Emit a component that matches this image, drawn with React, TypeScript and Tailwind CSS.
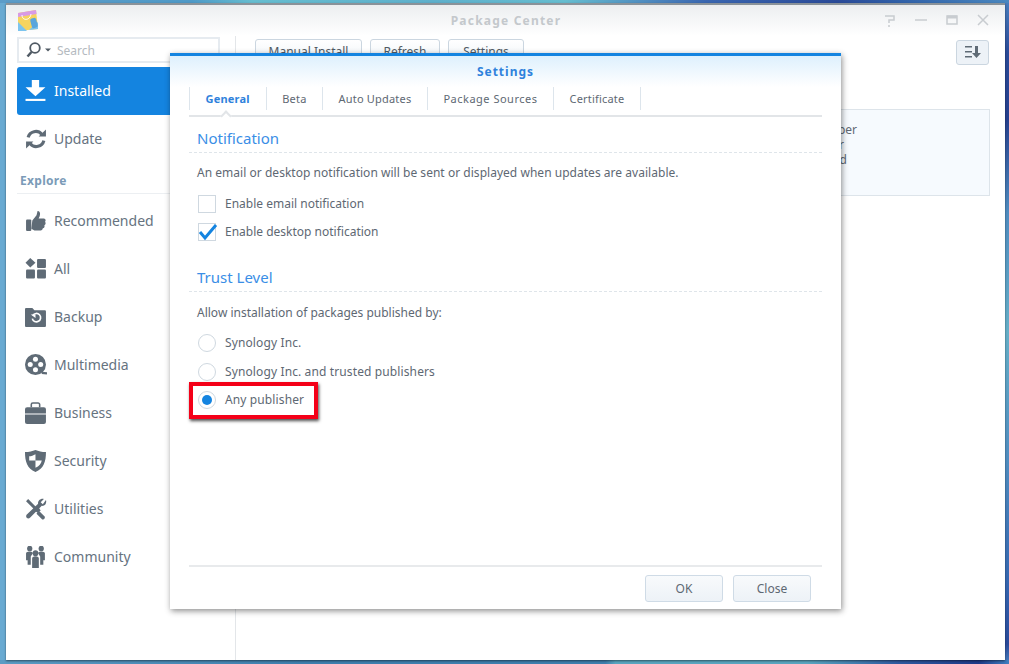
import { ReactNode } from 'react';

const font = { fontFamily: '"Noto Sans", sans-serif' };

function Logo() {
  return (
    <svg width="24" height="24" viewBox="0 0 24 24" className="ml-[10px]">
      <path d="M2 4 L20 1 L22 20 L2 22 Z" fill="#f6d45f" />
      <path d="M2 13 L11 22 L2 22 Z" fill="#7cc4ee" />
      <path d="M13 21 L22 13 L22 20 Z" fill="#7cc4ee" />
      <path d="M2 4 L20 1 L20.6 5 L2 8 Z" fill="#d89ae6" />
      <path d="M6 6 C6 12 14 12 15 5" fill="none" stroke="#fff" strokeWidth="1" />
      <rect x="15" y="9" width="6" height="10" rx="2" fill="#5aa6dc" transform="rotate(-15 18 14)" />
    </svg>
  );
}

const icons: Record<string, ReactNode> = {
  installed: (
    <g fill="#fff">
      <path d="M6.500 0h7v7h6L10 15.500.5 7h6z" />
      <rect x="0.500" y="18" width="19" height="2" />
    </g>
  ),
  update: (
    <g fill="none" stroke="#5f6b76" strokeWidth="3">
      <path d="M3 9a7.500 7.500 0 0 1 13-3" />
      <path d="M18 12a7.500 7.500 0 0 1-13 3" />
      <path d="M13 8h7V1.500z" fill="#5f6b76" stroke="none" />
      <path d="M8 13H1v6.500z" fill="#5f6b76" stroke="none" />
    </g>
  ),
  recommended: (
    <g fill="#5f6b76">
      <rect x="1" y="9" width="5" height="11" rx="1" />
      <path d="M7 10l4-5 1-4c2 0 3 2 2 5l-1 2h5c2 0 2 3 1 3 1 1 1 3-.5 3.500.5 1 0 3-1.500 3 0 1-1 2-2 2h-6l-3-1.500z" />
    </g>
  ),
  all: (
    <g fill="#5f6b76">
      <path d="M5 0l5 4.500L5 9 .5 4.500z" />
      <rect x="11.500" y="1" width="8.500" height="8.500" rx="1" />
      <rect x="1" y="11" width="8.500" height="8.500" rx="1" />
      <rect x="11.500" y="11" width="8.500" height="8.500" rx="1" />
    </g>
  ),
  backup: (
    <g>
      <path d="M0 3a1 1 0 0 1 1-1h6l2 2h10a1 1 0 0 1 1 1v14a1 1 0 0 1-1 1H1a1 1 0 0 1-1-1z" fill="#5f6b76" />
      <path d="M7.500 9a4 4 0 1 1-.5 3" fill="none" stroke="#fff" strokeWidth="1.600" />
      <path d="M5.500 8h4.500v3.500z" fill="#fff" />
    </g>
  ),
  multimedia: (
    <g>
      <circle cx="10" cy="10" r="10" fill="#5f6b76" />
      <circle cx="10" cy="5" r="2.400" fill="#fff" />
      <circle cx="10" cy="15" r="2.400" fill="#fff" />
      <circle cx="5" cy="10" r="2.400" fill="#fff" />
      <circle cx="15" cy="10" r="2.400" fill="#fff" />
      <path d="M16 18l5 .5" stroke="#5f6b76" strokeWidth="2" />
    </g>
  ),
  business: (
    <g fill="#5f6b76">
      <path d="M0 7a2 2 0 0 1 2-2h16a2 2 0 0 1 2 2v4H0z" />
      <path d="M0 12h20v7a2 2 0 0 1-2 2H2a2 2 0 0 1-2-2z" />
      <path d="M6 5V2.500A1.500 1.500 0 0 1 7.500 1h5A1.500 1.500 0 0 1 14 2.500V5" fill="none" stroke="#5f6b76" strokeWidth="1.500" />
    </g>
  ),
  security: (
    <g>
      <path d="M0 2c4 0 7-1 10-2 3 1 6 2 10 2 0 9-2 16-10 19C2 18 0 11 0 2z" fill="#5f6b76" />
      <path d="M10 4v6H4c0-2 0-3 0-4 2 0 4-1 6-2zM10 10h6c-.5 3-2.500 5.500-6 7z" fill="#fff" />
    </g>
  ),
  utilities: (
    <g fill="#5f6b76">
      <path d="M1 3l2-2 8 8 2 0 2 3-3 2-3-2-1-2z" />
      <path d="M20 2c1 3-1 6-4 5.500L5 18.500C3 21 0 18.500 1.500 16l11-10.500C12 3 15 0 18 1l-3 3 2 2z" />
      <path d="M13 12l6 6c0 2-1 3-2.500 2.500L11 15z" />
    </g>
  ),
  community: (
    <g fill="#5f6b76">
      <ellipse cx="4.500" cy="2.500" rx="2.500" ry="2.800" />
      <ellipse cx="15.500" cy="2.500" rx="2.500" ry="2.800" />
      <path d="M1 7q0-1.500 2-1.500h3q1.500 0 1.500 1.500L5.500 10v8H2.500v-4.500H1z" />
      <path d="M19 7q0-1.500-2-1.500h-3q-1.500 0-1.500 1.500l2 3v8h3v-4.500H19z" />
      <ellipse cx="10" cy="7" rx="2.700" ry="3" />
      <path d="M6.800 12a2 2 0 0 1 2-2h2.400a2 2 0 0 1 2 2v9H6.800z" />
    </g>
  ),
};

function NavItem({ icon, label, active }: { icon: string; label: string; active?: boolean }) {
  return (
    <div
      className={`flex h-[48px] items-center rounded-[3px] pl-[8px] ${active ? 'bg-[#1484e0] text-white' : 'text-[#66737f]'}`}
    >
      <svg width="22" height="22" viewBox="0 0 21 21" className="shrink-0">
        {icons[icon]}
      </svg>
      <span className="-mt-[2px] ml-[7px] text-[14px]">{label}</span>
    </div>
  );
}

function TopButton({ label, width }: { label: string; width: string }) {
  return (
    <div
      className={`flex h-[26px] items-center justify-center rounded-[3px] border border-[#cbd6e0] bg-gradient-to-b from-[#ffffff] to-[#edf2f7] text-[12px] text-[#505a64] ${width}`}
    >
      {label}
    </div>
  );
}

function Tab({ label, active, wide }: { label: string; active?: boolean; wide?: boolean }) {
  return (
    <div
      className={`flex h-[23px] items-center border-r border-[#dde5ec] pl-[15.500px] pt-[2px] text-[11px] ${active ? 'pr-[16px] font-bold text-[#2f82dc]' : 'pr-[15.500px] text-[#5e6873]'} ${wide ? 'tracking-[0.5px]' : 'tracking-[0.2px]'}`}
    >
      {label}
    </div>
  );
}

function SectionTitle({ label }: { label: string }) {
  return (
    <div className="border-b border-dashed border-[#dfe5ea] pb-[4px] pl-[8px] text-[15px] leading-[20px] text-[#3a8ee6]">
      {label}
    </div>
  );
}

function Check({ label, checked }: { label: string; checked?: boolean }) {
  return (
    <div className="flex h-[28px] items-center pl-[9px] text-[12px] text-[#5e6873]">
      <div className="relative mr-[9px] h-[18px] w-[18px] border border-[#cfd8e0] bg-white">
        {checked && (
          <svg width="20" height="18" viewBox="0 0 20 18" className="absolute left-[-1px] top-[-1px]">
            <path d="M2 9l5 6L18 2" fill="none" stroke="#1484e0" strokeWidth="3" />
          </svg>
        )}
      </div>
      {label}
    </div>
  );
}

function Radio({ label, checked }: { label: string; checked?: boolean }) {
  return (
    <div className="flex h-[28.500px] items-center pl-[9px] text-[12px] tracking-[0.12px] text-[#5e6873]">
      <div className="mr-[9px] flex h-[18px] w-[18px] items-center justify-center rounded-full border border-[#cfd8e0] bg-white">
        {checked && <div className="h-[10px] w-[10px] rounded-full bg-[#1484e0]" />}
      </div>
      {label}
    </div>
  );
}

function Wallpaper() {
  return (
    <>
      <div className="absolute inset-y-0 left-0 w-[6px] bg-[#69aad2]" />
      <div className="absolute inset-y-0 right-0 w-[4px] bg-[linear-gradient(to_bottom,#4a80c0_0%,#2a4a98_8%,#26408e_18%,#4f8cc0_32%,#66afc8_50%,#4f8cc0_70%,#3566b0_88%,#2a4a9a_97%,#4a80c0_100%)]" />
      <div className="absolute inset-x-0 top-0 h-[3px] bg-[linear-gradient(to_right,#5d9cc8_0%,#4f9ac8_19%,#66bdd0_25%,#5fb0cc_43%,#66bdd0_56%,#4f8cc0_64%,#3a66b0_70%,#2a4a98_83%,#3060a8_89%,#4a88c0_100%)]" />
      <div className="absolute inset-x-0 bottom-0 h-[4px] bg-[linear-gradient(to_right,#5c9cc4_0%,#3f7fae_30%,#3f7fae_60%,#5aa6c0_61%,#5aa6c0_80%,#2f5aa0_89%,#1f3a88_97%,#4080c0_100%)]" />
    </>
  );
}

export default function App() {
  return (
    <div className="relative h-[664px] w-[1009px] overflow-hidden bg-[#4f8cc0] pb-[4px] pl-[6px] pr-[4px] pt-[3px]" style={font}>
      <Wallpaper />

      {/* Main window */}
      <div className="relative flex h-[657px] flex-col border-t-2 border-[#8a9299] bg-white shadow-[0_1px_2px_rgba(0,0,0,0.5)]">
        <div className="flex h-[31px] items-center justify-center bg-gradient-to-b from-[#eceef0] to-[#ffffff] pl-[1px] text-[12px] font-bold tracking-[1.2px] text-[#c4c8cc]">
          Package Center
        </div>
        <div className="absolute right-[15px] top-[8px] flex items-center gap-[17px]">
          <svg width="14" height="14" viewBox="0 0 14 14" fill="none" stroke="#c8ccd0" strokeWidth="1.500">
            <path d="M2 3h9v4H6v3M6 12v2" />
          </svg>
          <svg width="14" height="14" viewBox="0 0 14 14" fill="none" stroke="#c8ccd0" strokeWidth="1.500">
            <path d="M1 7h12" />
          </svg>
          <svg width="14" height="14" viewBox="0 0 14 14" fill="none" stroke="#c8ccd0" strokeWidth="1.500">
            <path d="M2 3h10v8H2z" />
            <path d="M2 4h10" strokeWidth="3" />
          </svg>
          <svg width="14" height="14" viewBox="0 0 14 14" fill="none" stroke="#c8ccd0" strokeWidth="1.500">
            <path d="M2 2l10 10M12 2L2 12" />
          </svg>
        </div>
        <div className="absolute left-0 top-[4px]">
          <Logo />
        </div>

        <div className="flex min-h-0 flex-1">
          {/* Sidebar */}
          <div className="w-[230px] shrink-0 border-r border-[#e3e6e9]">
            <div className="ml-[11px] mt-[1px] flex h-[26px] w-[203px] items-center border-2 border-[#e6ebf0] bg-white pl-[7px]">
              <svg width="26" height="16" viewBox="0 0 26 16" fill="none">
                <circle cx="9" cy="6" r="4.800" stroke="#505a64" strokeWidth="1.800" />
                <path d="M5.500 10L1.500 14.500" stroke="#505a64" strokeWidth="2.500" />
                <path d="M19 6.500h6l-3 3z" fill="#505a64" />
              </svg>
              <span className="ml-[5px] mt-[2px] text-[12px] text-[#b4bac0]">Search</span>
            </div>
            <div className="ml-[11px] mt-[4px]">
              <NavItem icon="installed" label="Installed" active />
              <NavItem icon="update" label="Update" />
              <div className="mb-[3px] mr-[10px] mt-[8px] border-b border-[#eceff2] pb-[2px] pl-[3px] text-[12px] font-bold leading-[20px] tracking-[0.3px] text-[#7b9bb8]">
                Explore
              </div>
              <NavItem icon="recommended" label="Recommended" />
              <NavItem icon="all" label="All" />
              <NavItem icon="backup" label="Backup" />
              <NavItem icon="multimedia" label="Multimedia" />
              <NavItem icon="business" label="Business" />
              <NavItem icon="security" label="Security" />
              <NavItem icon="utilities" label="Utilities" />
              <NavItem icon="community" label="Community" />
            </div>
          </div>

          {/* Content */}
          <div className="min-w-0 flex-1 pl-[19px] pr-[15px] pt-[3px]">
            <div className="flex items-center gap-[8px] pr-[1px]">
              <TopButton label="Manual Install" width="w-[107px]" />
              <TopButton label="Refresh" width="w-[70px]" />
              <TopButton label="Settings" width="w-[76px]" />
              <div className="ml-auto flex h-[25px] w-[33px] items-center justify-center rounded-[3px] border border-[#cbd6e0] bg-[#edf2f7]">
                <svg width="16" height="14" viewBox="0 0 16 14" fill="#5f6b76">
                  <rect x="0" y="1" width="7" height="1.500" />
                  <rect x="0" y="6" width="7" height="1.500" />
                  <rect x="0" y="11" width="7" height="1.500" />
                  <path d="M10 1h3v7h3l-4.500 5L7 8h3z" />
                </svg>
              </div>
            </div>
            <div className="mt-[44px] flex h-[87px] flex-col items-end border border-[#dde4ea] bg-[#f6fafe] pr-[132px] pt-[12px] text-[12px] leading-[15px] text-[#5e6873]">
              <span>Developer</span>
              <span className="pr-[13px]">for</span>
              <span className="pr-[10px]">installed</span>
            </div>
          </div>
        </div>
      </div>

      {/* Settings dialog */}
      <div className="absolute left-[170px] top-[53px] flex h-[556px] w-[671px] flex-col border-t-[3px] border-[#1484e0] bg-white shadow-[1px_2px_6px_rgba(0,0,0,0.45)]">
        <div className="flex h-[31px] shrink-0 items-center justify-center bg-gradient-to-b from-[#def0fd] to-[#ffffff] text-[12px] font-bold tracking-[1px] text-[#2f82dc]">
          Settings
        </div>
        <div className="flex flex-1 flex-col px-[19px]">
          <div className="relative flex h-[30px] items-start border-b-2 border-[#e2e5e8]">
            <div className="flex border-l border-[#dde5ec]">
              <Tab label="General" active />
              <Tab label="Beta" />
              <Tab label="Auto Updates" />
              <Tab label="Package Sources" wide />
              <Tab label="Certificate" />
            </div>
            <div className="absolute bottom-[-5px] left-[33px] h-[8px] w-[8px] rotate-45 border-l-2 border-t-2 border-[#e2e5e8] bg-white" />
          </div>

          <div className="mt-[11px]">
            <SectionTitle label="Notification" />
          </div>
          <div className="mt-[11px] pl-[8px] text-[12px] leading-[18px] tracking-[0.03px] text-[#5e6873]">
            An email or desktop notification will be sent or displayed when updates are available.
          </div>
          <div className="mt-[8px]">
            <Check label="Enable email notification" />
            <Check label="Enable desktop notification" checked />
          </div>

          <div className="mt-[21px]">
            <SectionTitle label="Trust Level" />
          </div>
          <div className="mt-[12px] pl-[8px] text-[12px] leading-[18px] text-[#5e6873]">
            Allow installation of packages published by:
          </div>
          <div className="mt-[7px]">
            <Radio label="Synology Inc." />
            <Radio label="Synology Inc. and trusted publishers" />
            <div className="relative">
              <Radio label="Any publisher" checked />
              {/* Annotation box */}
              <div className="absolute left-0 top-[-4px] h-[37px] w-[129px] border-[4px] border-[#f40018] shadow-[1px_2px_3px_rgba(0,0,0,0.7)]" />
            </div>
          </div>

          <div className="mt-auto flex h-[44px] items-center justify-end gap-[10px] border-t-2 border-[#e8eaec] pr-[11px] pt-[1px]">
            <div className="flex h-[27px] w-[78px] items-center justify-center rounded-[3px] border border-[#cfdbe6] bg-gradient-to-b from-[#f8fafc] to-[#edf2f7] text-[12px] text-[#5e6873]">
              OK
            </div>
            <div className="flex h-[27px] w-[78px] items-center justify-center rounded-[3px] border border-[#cfdbe6] bg-gradient-to-b from-[#f8fafc] to-[#edf2f7] text-[12px] text-[#5e6873]">
              Close
            </div>
          </div>
        </div>
      </div>
    </div>
  );
}
